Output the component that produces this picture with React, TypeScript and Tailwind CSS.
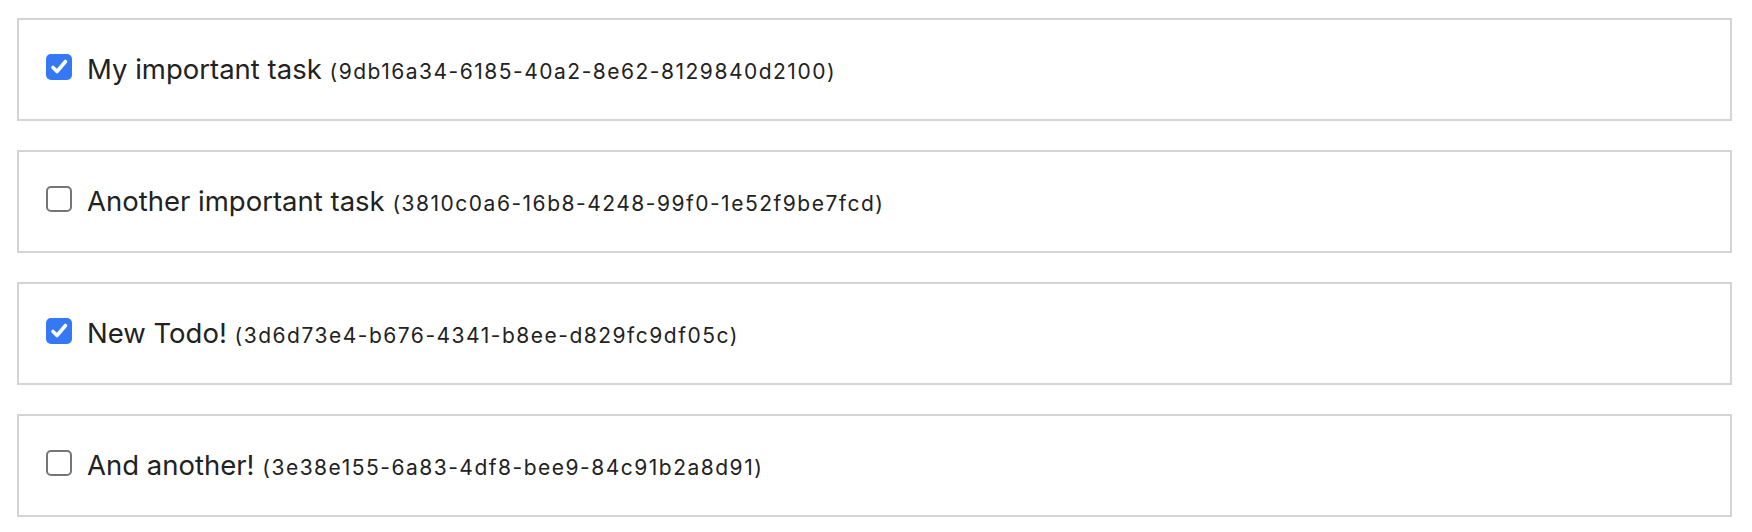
const todos = [
  { title: 'My important task', id: '9db16a34-6185-40a2-8e62-8129840d2100', done: true },
  { title: 'Another important task', id: '3810c0a6-16b8-4248-99f0-1e52f9be7fcd', done: false },
  { title: 'New Todo!', id: '3d6d73e4-b676-4341-b8ee-d829fc9df05c', done: true },
  { title: 'And another!', id: '3e38e155-6a83-4df8-bee9-84c91b2a8d91', done: false },
];

function Checkbox({ checked }: { checked: boolean }) {
  if (checked) {
    return (
      <span className="mb-[6px] block h-[26px] w-[26px] shrink-0 rounded-[5px] bg-[#3478f6]">
        <svg width="26" height="26" viewBox="0 0 26 26" fill="none">
          <path d="M7 13.5 L11 17.5 L19.5 7.5" stroke="white" strokeWidth="3.6" strokeLinecap="round" strokeLinejoin="round" />
        </svg>
      </span>
    );
  }
  return <span className="mb-[6px] h-[26px] w-[26px] shrink-0 rounded-[5px] border-2 border-[#767676] bg-white" />;
}

export default function App() {
  return (
    <div className="min-h-screen bg-white pt-[18px] pl-[17px] pr-[20px] font-['Inter',sans-serif] text-[#222]">
      <div className="flex flex-col gap-[29px]">
        {todos.map((t) => (
          <div key={t.id} className="flex h-[103px] items-center gap-[15px] border-2 border-[#d4d4d4] pl-[27px]">
            <Checkbox checked={t.done} />
            <span className="text-[27.5px] leading-none">
              {t.title} <span className="text-[21px] tracking-[1.5px]">({t.id})</span>
            </span>
          </div>
        ))}
      </div>
    </div>
  );
}
